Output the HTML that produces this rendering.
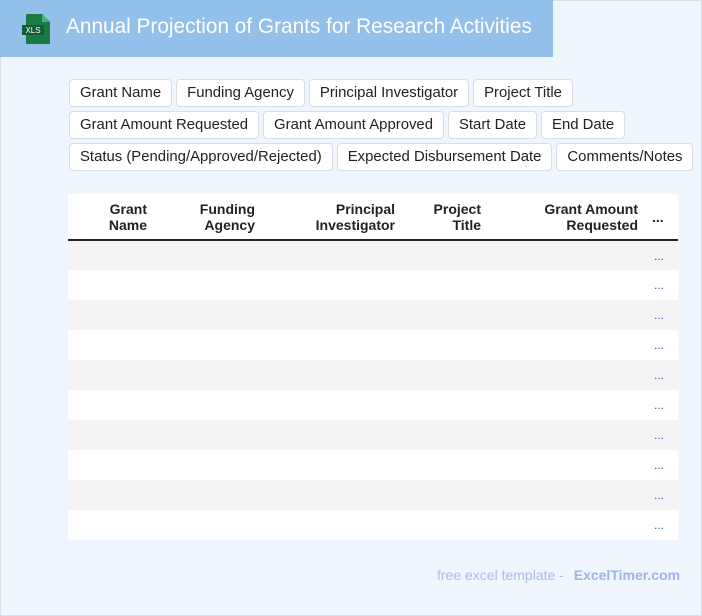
<!DOCTYPE html>
<html><head><meta charset="utf-8"><style>
*{box-sizing:border-box;margin:0;padding:0}
html,body{width:702px;height:616px;overflow:hidden}
body{background:#eff6fe;font-family:"Liberation Sans",Arial,sans-serif;position:relative;box-shadow:inset 0 0 0 1px #d6e0ea}
.hdr{position:absolute;left:0;top:0;width:553px;height:57px;background:#92c0eb}
.hdr h1{position:absolute;left:66px;top:15px;font-size:20.8px;font-weight:normal;color:#fff;white-space:nowrap}
.ico{position:absolute;left:21px;top:13px}
.chips{position:absolute;left:69px;top:79px;width:632px}
.row{display:flex;gap:4px;margin-bottom:4px}
.chip{height:28px;line-height:27px;padding:0 10px;background:#fff;border:1px solid #d8dde3;border-radius:4px;font-size:14.9px;color:#222;white-space:nowrap}
table{position:absolute;left:68px;top:194px;width:610px;border-collapse:collapse}
th{height:46px;background:#fff;font-size:14px;font-weight:bold;color:#222;text-align:right;line-height:16px;border-bottom:2px solid #222;vertical-align:middle}
td{height:30px;font-size:12px;color:#2a5ea8;text-align:right}
tr:nth-child(odd) td{background:#f4f4f4}
tr:nth-child(even) td{background:#fff}
.ft{position:absolute;left:437px;top:567px;font-size:14px;color:#a9bdee;white-space:nowrap}
.ft b{color:#9db3ea;margin-left:6px}
</style></head><body>
<div class="hdr">
<svg class="ico" width="30" height="32" viewBox="0 0 30 32"><path d="M6 1h15l8 8v21a1 1 0 0 1-1 1H6a1 1 0 0 1-1-1V2a1 1 0 0 1 1-1z" fill="#1a7a45"/><path d="M21 1v8h8z" fill="#4caf72"/><rect x="1" y="12" width="22" height="10" fill="#135c33"/><text x="12" y="20" font-size="8" fill="#fff" text-anchor="middle" font-family="Liberation Sans" >XLS</text></svg>
<h1>Annual Projection of Grants for Research Activities</h1>
</div>
<div class="chips">
<div class="row"><span class="chip">Grant Name</span><span class="chip">Funding Agency</span><span class="chip">Principal Investigator</span><span class="chip">Project Title</span></div>
<div class="row"><span class="chip">Grant Amount Requested</span><span class="chip">Grant Amount Approved</span><span class="chip">Start Date</span><span class="chip">End Date</span></div>
<div class="row"><span class="chip">Status (Pending/Approved/Rejected)</span><span class="chip">Expected Disbursement Date</span><span class="chip">Comments/Notes</span></div>
</div>
<table>
<thead><tr>
<th style="width:79px">Grant<br>Name</th>
<th style="width:108px">Funding<br>Agency</th>
<th style="width:140px">Principal<br>Investigator</th>
<th style="width:86px">Project<br>Title</th>
<th style="width:157px">Grant Amount<br>Requested</th>
<th style="width:40px;text-align:left;padding-left:14px">...</th>
</tr></thead>
<tbody>
<tr><td></td><td></td><td></td><td></td><td></td><td style="padding-right:14px">...</td></tr>
<tr><td></td><td></td><td></td><td></td><td></td><td style="padding-right:14px">...</td></tr>
<tr><td></td><td></td><td></td><td></td><td></td><td style="padding-right:14px">...</td></tr>
<tr><td></td><td></td><td></td><td></td><td></td><td style="padding-right:14px">...</td></tr>
<tr><td></td><td></td><td></td><td></td><td></td><td style="padding-right:14px">...</td></tr>
<tr><td></td><td></td><td></td><td></td><td></td><td style="padding-right:14px">...</td></tr>
<tr><td></td><td></td><td></td><td></td><td></td><td style="padding-right:14px">...</td></tr>
<tr><td></td><td></td><td></td><td></td><td></td><td style="padding-right:14px">...</td></tr>
<tr><td></td><td></td><td></td><td></td><td></td><td style="padding-right:14px">...</td></tr>
<tr><td></td><td></td><td></td><td></td><td></td><td style="padding-right:14px">...</td></tr>
</tbody>
</table>
<div class="ft">free excel template - <b>ExcelTimer.com</b></div>
</body></html>
